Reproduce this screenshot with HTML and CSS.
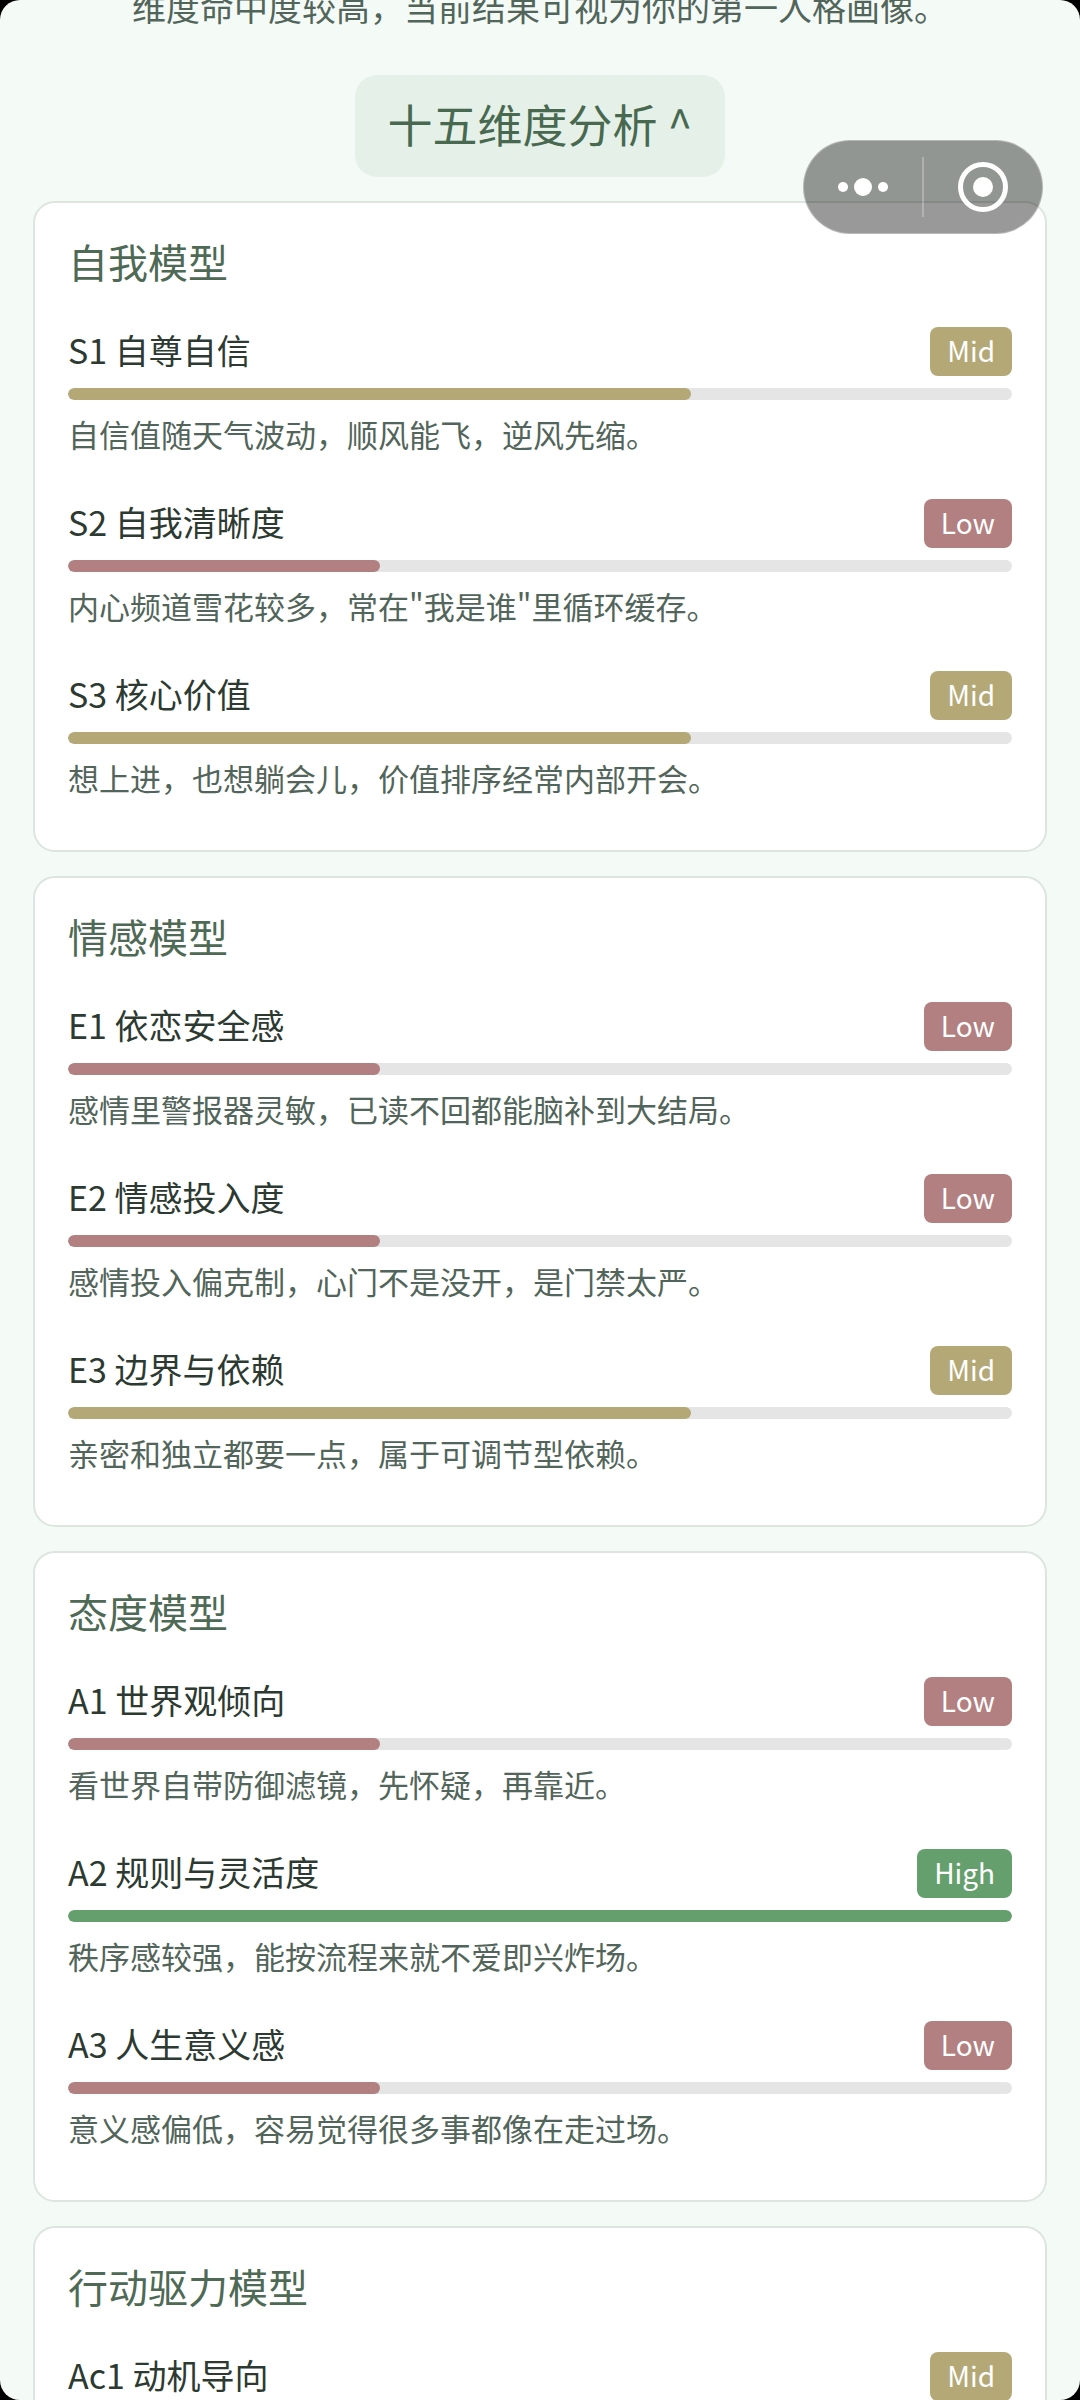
FILE: index.html
```html
<!DOCTYPE html>
<html lang="zh-CN">
<head>
    <meta charset="UTF-8">
    <meta name="viewport" content="width=device-width, initial-scale=1.0">
    <title>十五维度分析</title>
    <link rel="stylesheet" href="styles.css">
</head>

<body>
    <div class="screen">
        <div class="summary">
            <p>维度命中度较高，当前结果可视为你的第一人格画像。</p>
        </div>

        <button class="toggle" type="button">十五维度分析 ^</button>

        <!-- mini program capsule -->
        <div class="capsule">
            <button class="capsule-button" type="button" aria-label="更多">
                <svg width="52" height="20" viewBox="0 0 52 20" fill="#fff">
                    <circle cx="6" cy="10" r="5"/>
                    <circle cx="26" cy="10" r="9"/>
                    <circle cx="46" cy="10" r="5"/>
                </svg>
            </button>
            <span class="capsule-line"></span>
            <button class="capsule-button" type="button" aria-label="关闭">
                <svg width="50" height="50" viewBox="0 0 50 50">
                    <circle cx="25" cy="25" r="22.5" fill="none" stroke="#fff" stroke-width="5"/>
                    <circle cx="25" cy="25" r="10" fill="#fff"/>
                </svg>
            </button>
        </div>

        <main class="models">
            <section class="card">
                <h2>自我模型</h2>
                <div class="item">
                    <div class="item-head">
                        <h3>S1 自尊自信</h3>
                        <span class="badge mid">Mid</span>
                    </div>
                    <div class="bar"><div class="fill mid" style="width:66%"></div></div>
                    <p>自信值随天气波动，顺风能飞，逆风先缩。</p>
                </div>
                <div class="item">
                    <div class="item-head">
                        <h3>S2 自我清晰度</h3>
                        <span class="badge low">Low</span>
                    </div>
                    <div class="bar"><div class="fill low" style="width:33%"></div></div>
                    <p>内心频道雪花较多，常在"我是谁"里循环缓存。</p>
                </div>
                <div class="item">
                    <div class="item-head">
                        <h3>S3 核心价值</h3>
                        <span class="badge mid">Mid</span>
                    </div>
                    <div class="bar"><div class="fill mid" style="width:66%"></div></div>
                    <p>想上进，也想躺会儿，价值排序经常内部开会。</p>
                </div>
            </section>

            <section class="card">
                <h2>情感模型</h2>
                <div class="item">
                    <div class="item-head">
                        <h3>E1 依恋安全感</h3>
                        <span class="badge low">Low</span>
                    </div>
                    <div class="bar"><div class="fill low" style="width:33%"></div></div>
                    <p>感情里警报器灵敏，已读不回都能脑补到大结局。</p>
                </div>
                <div class="item">
                    <div class="item-head">
                        <h3>E2 情感投入度</h3>
                        <span class="badge low">Low</span>
                    </div>
                    <div class="bar"><div class="fill low" style="width:33%"></div></div>
                    <p>感情投入偏克制，心门不是没开，是门禁太严。</p>
                </div>
                <div class="item">
                    <div class="item-head">
                        <h3>E3 边界与依赖</h3>
                        <span class="badge mid">Mid</span>
                    </div>
                    <div class="bar"><div class="fill mid" style="width:66%"></div></div>
                    <p>亲密和独立都要一点，属于可调节型依赖。</p>
                </div>
            </section>

            <section class="card">
                <h2>态度模型</h2>
                <div class="item">
                    <div class="item-head">
                        <h3>A1 世界观倾向</h3>
                        <span class="badge low">Low</span>
                    </div>
                    <div class="bar"><div class="fill low" style="width:33%"></div></div>
                    <p>看世界自带防御滤镜，先怀疑，再靠近。</p>
                </div>
                <div class="item">
                    <div class="item-head">
                        <h3>A2 规则与灵活度</h3>
                        <span class="badge high">High</span>
                    </div>
                    <div class="bar"><div class="fill high" style="width:100%"></div></div>
                    <p>秩序感较强，能按流程来就不爱即兴炸场。</p>
                </div>
                <div class="item">
                    <div class="item-head">
                        <h3>A3 人生意义感</h3>
                        <span class="badge low">Low</span>
                    </div>
                    <div class="bar"><div class="fill low" style="width:33%"></div></div>
                    <p>意义感偏低，容易觉得很多事都像在走过场。</p>
                </div>
            </section>

            <section class="card">
                <h2>行动驱力模型</h2>
                <div class="item">
                    <div class="item-head">
                        <h3>Ac1 动机导向</h3>
                        <span class="badge mid">Mid</span>
                    </div>
                    <div class="bar"><div class="fill mid" style="width:66%"></div></div>
                </div>
            </section>
        </main>
    </div>
</body>
</html>
```

FILE: styles.css
```css
*{
    margin: 0;
    padding: 0;
    box-sizing: border-box;
}
body{
    background-color: #000;
    font-family: "Noto Sans CJK SC", sans-serif;
    color: #52655a;
}
button{
    border: none;
    background: none;
    font-family: inherit;
    cursor: pointer;
}
h2, h3{
    font-weight: 400;
}
.screen{
    position: relative;
    display: flex;
    flex-direction: column;
    align-items: center;
    height: 100vh;
    overflow: hidden;
    border-radius: 20px;
    background-color: #f4faf6;
}

/* the last line of the summary, scrolled partly out of view */
.summary{
    display: flex;
    align-items: flex-end;
    flex-shrink: 0;
    height: 34px;
    overflow: hidden;
    font-size: 34px;
    line-height: 54px;
}
.toggle{
    flex-shrink: 0;
    margin: 41px 0 24px;
    padding: 16px 32px 20px;
    border-radius: 22px;
    background-color: #e5f1e8;
    color: #486950;
    font-size: 45px;
    line-height: 66px;
}

.capsule{
    position: absolute;
    top: 140px;
    right: 37px;
    display: flex;
    align-items: center;
    width: 240px;
    height: 94px;
    border: 1px solid rgba(255,255,255,0.3);
    border-radius: 47px;
    background-color: rgba(0,0,0,0.4);
}
.capsule-button{
    display: flex;
    flex: 1;
    align-items: center;
    justify-content: center;
    height: 100%;
}
.capsule-line{
    width: 2px;
    height: 60px;
    background-color: rgba(255,255,255,0.25);
}

.models{
    display: flex;
    flex-direction: column;
    gap: 24px;
    width: 100%;
    padding: 0 33px;
}
.card{
    padding: 30px 33px 49px;
    border: 2px solid #dde5e0;
    border-radius: 22px;
    background-color: #fff;
}
.card h2{
    margin-bottom: 38px;
    color: #4e6a55;
    font-size: 40px;
    line-height: 56px;
}
.item + .item{
    margin-top: 42px;
}
.item-head{
    display: flex;
    align-items: flex-start;
    justify-content: space-between;
    height: 49px;
    margin-bottom: 12px;
}
.item h3{
    color: #2c3a31;
    font-size: 34px;
    line-height: 45px;
}
.item p{
    margin-top: 10px;
    font-size: 31px;
    line-height: 47px;
}
.badge{
    padding: 0 17px 2px;
    border-radius: 8px;
    color: #fff;
    font-size: 28px;
    line-height: 47px;
}
.bar{
    height: 12px;
    overflow: hidden;
    border-radius: 6px;
    background-color: #e5e5e5;
}
.fill{
    height: 100%;
    border-radius: 6px;
}
.low{
    background-color: #b28080;
}
.mid{
    background-color: #b4a976;
}
.high{
    background-color: #649f6d;
}
```
